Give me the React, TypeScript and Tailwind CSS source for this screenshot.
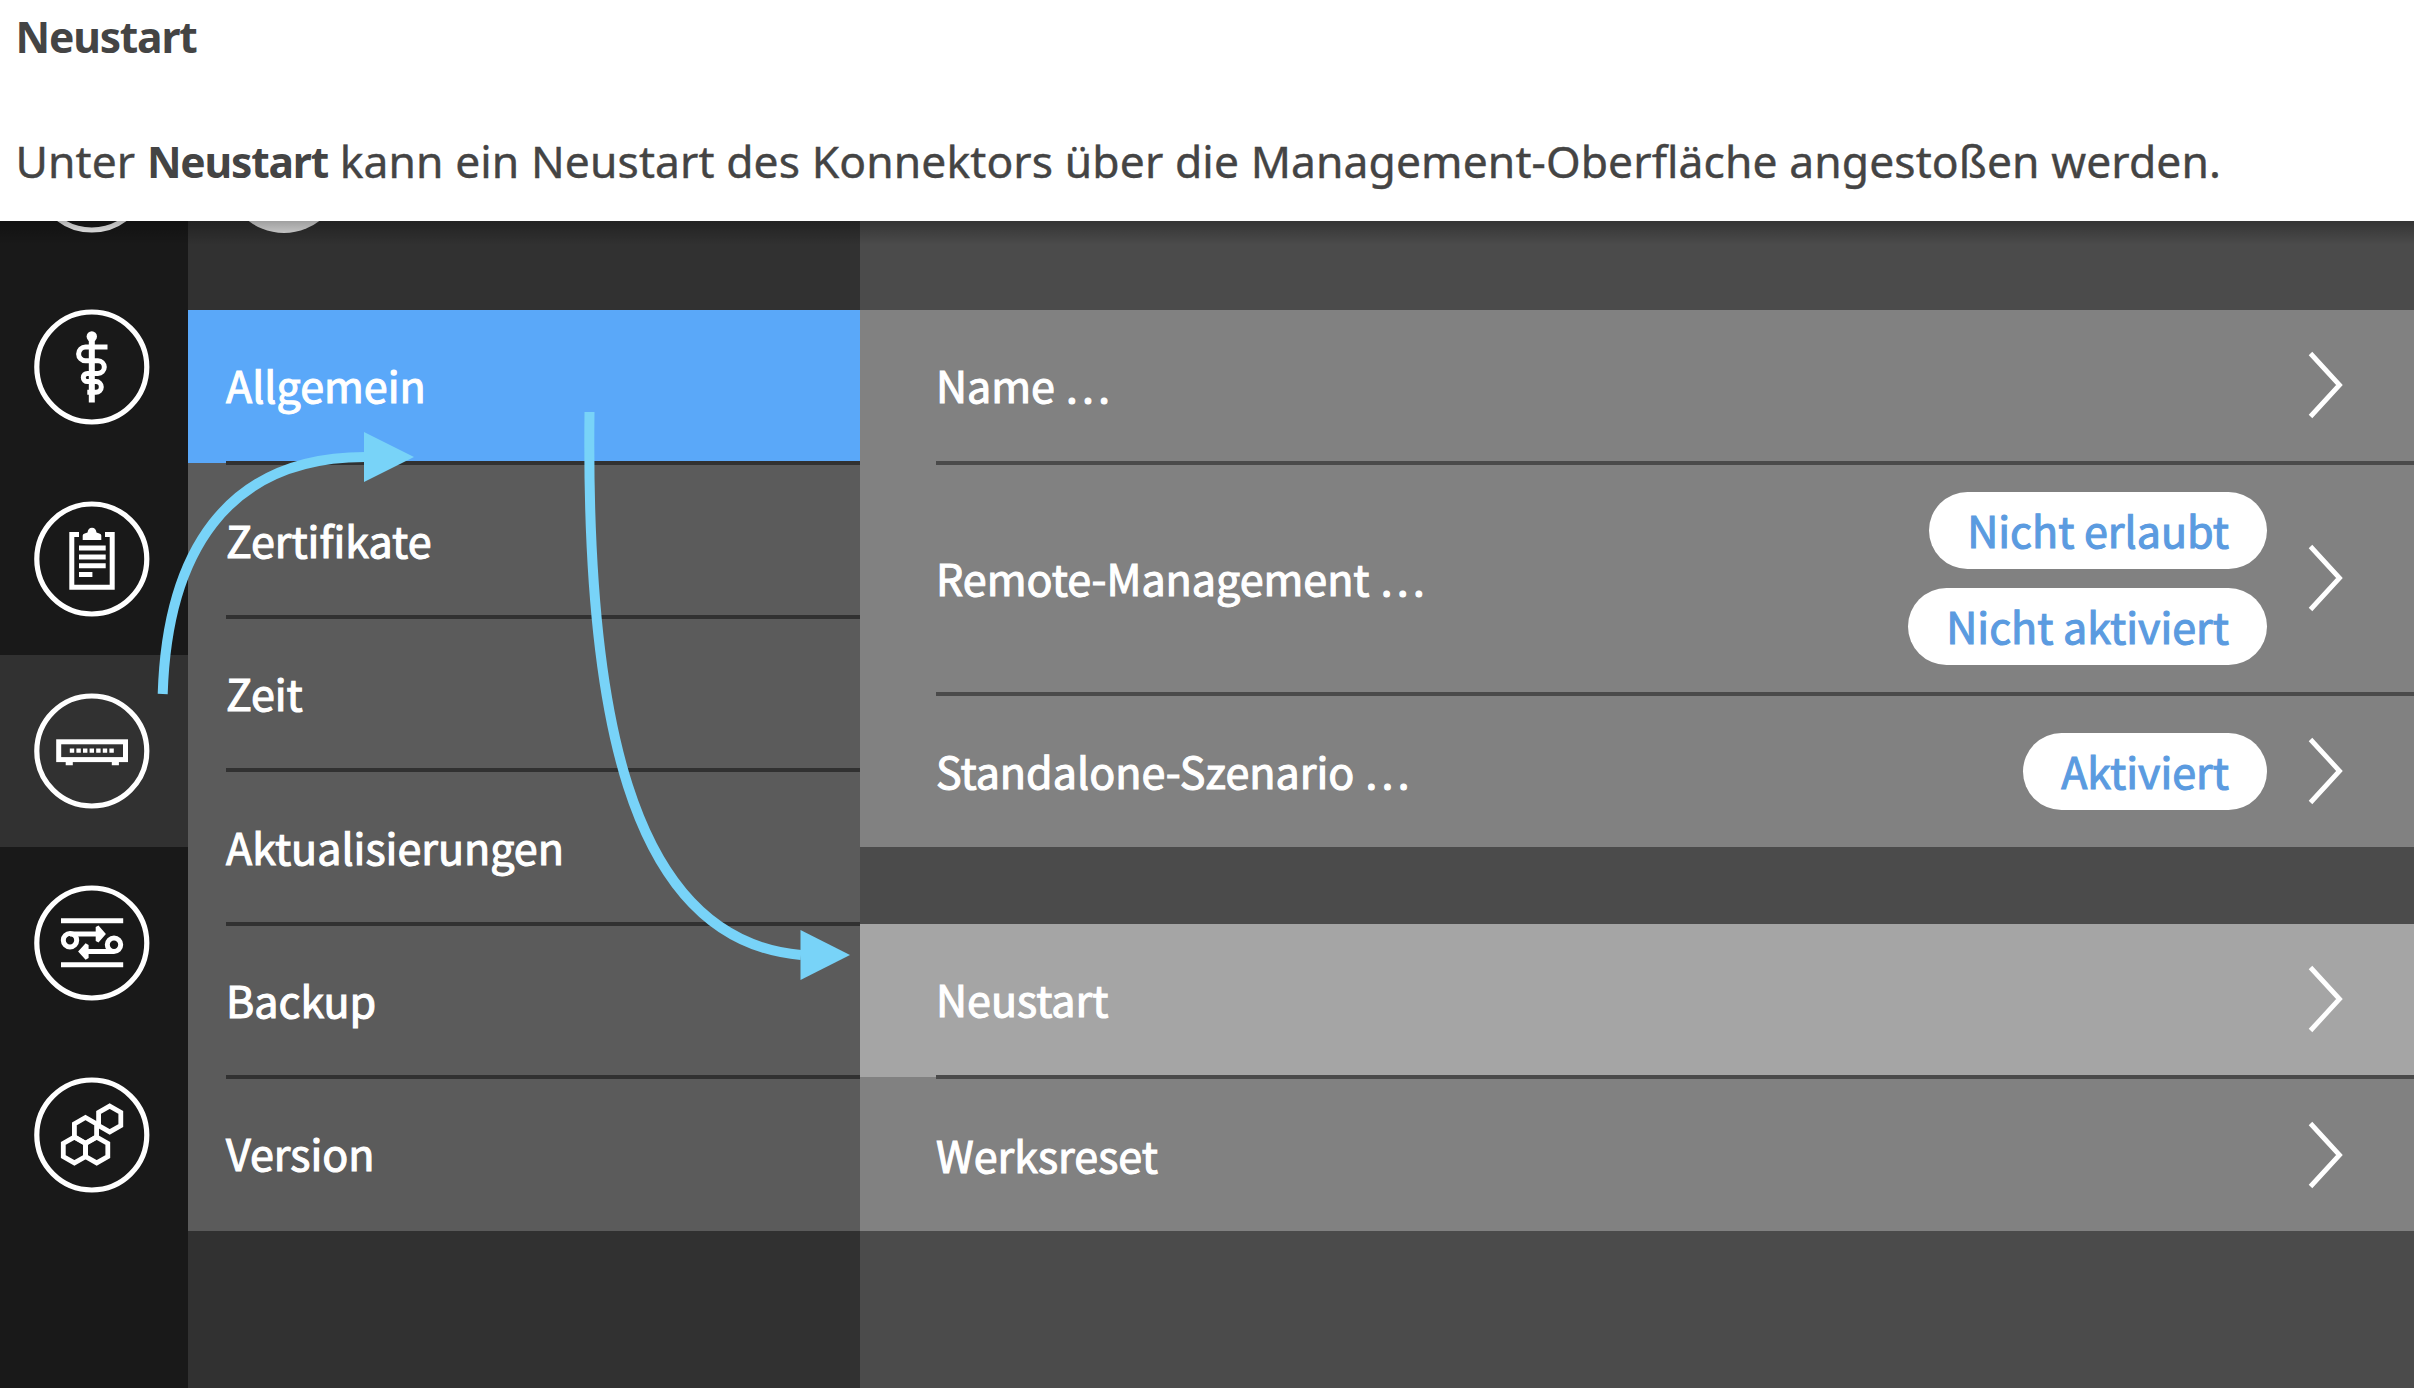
import type { ReactNode } from "react";

const uiFont =
  "font-['Noto_Sans_CJK_SC',sans-serif] text-[43px] leading-[64px] [-webkit-text-stroke:1.1px_currentColor]";

const strong = "font-bold text-[42.6px] tracking-[-1.2px] [-webkit-text-stroke:0px]";

const menu = [
  { label: "Allgemein", active: true, nudge: "-mt-[4px]" },
  { label: "Zertifikate", nudge: "-mt-[2px]" },
  { label: "Zeit", nudge: "-mt-[2px]" },
  { label: "Aktualisierungen", nudge: "-mt-[2px]" },
  { label: "Backup", nudge: "-mt-[2px]" },
  { label: "Version", nudge: "-mt-[4px]" },
];

function Icon({ children }: { children?: ReactNode }) {
  return (
    <svg viewBox="0 0 116 116" className="h-[116px] w-[116px]" fill="none" stroke="#fff" strokeWidth="5">
      <circle cx="57.8" cy="58" r="55" strokeWidth="5.2" />
      {children}
    </svg>
  );
}

function Asclepius() {
  return (
    <Icon>
      <circle cx="57.8" cy="27.5" r="5.2" fill="#fff" stroke="none" />
      <path d="M57.8 28V93.5" strokeWidth="6" />
      <path
        strokeWidth="5"
        d="M73.5 38H51.5a6.9 6.9 0 0 0 0 13.8H64a6.3 6.3 0 0 1 0 12.6H53.4a4.1 4.1 0 0 0 0 8.2H62a5.2 5.2 0 0 1 0 10.6H53.3"
      />
    </Icon>
  );
}

function Clipboard() {
  return (
    <Icon>
      <path d="M45 33.5H37.8V86.3H78.2V33.5H71" />
      <path
        d="M48.7 39V34.5q0-1.5 2-2l2.8-1q.6-4.8 4.5-4.8t4.5 4.8l2.8 1q2 .5 2 2V39z"
        fill="#fff"
        stroke="none"
      />
      <path d="M45 47H71.7M45 56H71.7M45 64.7H71.7M45 73.5H58.4" />
    </Icon>
  );
}

function Router() {
  return (
    <Icon>
      <rect x="24.7" y="48.8" width="66.8" height="17.8" />
      <path d="M31.7 70.2H38.8M77.8 70.2H84.9" strokeWidth="4" />
      <path d="M35.8 57.6H82" strokeWidth="4.4" strokeDasharray="4.4 2.2" />
    </Icon>
  );
}

function Exchange() {
  return (
    <Icon>
      <path d="M27 35.8H89.2M27 79.7H89.2" />
      <circle cx="36" cy="55.2" r="6.7" />
      <circle cx="80" cy="59.8" r="6.7" />
      <path d="M36 49H65M80 66.5H51" />
      <path
        d="M61.7 44.5L61.7 42L64.5 40.6L71.9 49L64.5 57.4L61.7 56zM54.6 60L51.6 58.2L44.1 66.5L51.6 74.8L54.6 73z"
        fill="#fff"
        stroke="none"
      />
    </Icon>
  );
}

function Hexagons() {
  const cells = [
    [75.7, 42],
    [51.5, 53.4],
    [40.4, 73],
    [62.7, 73],
  ];
  return (
    <Icon>
      {cells.map(([x, y]) => (
        <path key={x} strokeWidth="4.8" d={`M${x} ${y - 12.9}l11.1 6.4v13l-11.1 6.4l-11.1-6.4v-13z`} />
      ))}
    </Icon>
  );
}

function Chevron() {
  return (
    <svg viewBox="0 0 36 68" className="h-[68px] w-[36px]" fill="none" stroke="#fff" strokeWidth="4.8">
      <path d="M2.5 2.5L31.5 34L2.5 65.5" />
    </svg>
  );
}

function Pill({ children }: { children: ReactNode }) {
  return (
    <span className="flex h-[77px] items-center rounded-full bg-white px-[38px] text-[#5b9be0]">
      <span className="-mt-[2px]">{children}</span>
    </span>
  );
}

type RowProps = {
  label: string;
  pills?: string[];
  height: string;
  active?: boolean;
  line?: boolean;
  nudge?: string;
  sideNudge?: string;
};

function Row({ label, pills = [], height, active, line, nudge = "", sideNudge = "" }: RowProps) {
  return (
    <div
      className={`relative flex items-center pl-[76.5px] pr-[70px] ${height} ${active ? "bg-[#a5a5a5]" : "bg-[#818181]"}`}
    >
      <span className={`grow ${nudge}`}>{label}</span>
      <div className={`flex items-center gap-[41px] ${sideNudge}`}>
        <div className="flex flex-col items-end gap-[19px]">
          {pills.map((p) => (
            <Pill key={p}>{p}</Pill>
          ))}
        </div>
        <Chevron />
      </div>
      {line && <span className="absolute -bottom-[2px] left-[76px] right-0 z-10 h-[4px] bg-[#4a4a4a]" />}
    </div>
  );
}

export default function App() {
  return (
    <main className="flex h-[1388px] w-[2414px] flex-col overflow-hidden bg-white">
      <header className="h-[221px] pl-[15.5px] font-['Noto_Sans',sans-serif] text-[44.4px] leading-[60px] text-[#444] [-webkit-text-stroke:0.4px_currentColor]">
        <h1 className={`mt-[6px] ${strong}`}>Neustart</h1>
        <p className="mt-[65px] whitespace-nowrap tracking-[0.1px]">
          Unter <b className={strong}>Neustart</b> kann ein Neustart des Konnektors über die
          Management-Oberfläche angestoßen werden.
        </p>
      </header>
      <section className={`relative flex h-[1167px] text-white ${uiFont}`}>
        <nav className="flex w-[188px] flex-col bg-[#191919]">
          <div className="flex h-[50px] items-start overflow-hidden pl-[34px]">
            <div className="-mt-[104px]">
              <Icon />
            </div>
          </div>
          {[Asclepius, Clipboard, Router, Exchange, Hexagons].map((Glyph, i) => (
            <div key={i} className={`flex h-[192px] items-center pl-[34px] ${i === 2 ? "bg-[#313131]" : ""}`}>
              <Glyph />
            </div>
          ))}
        </nav>
        <aside className="flex w-[671.5px] flex-col bg-[#313131]">
          <div className="h-[88.5px] overflow-hidden pl-[38px]">
            <div className="-mt-[104px] h-[116px] w-[116px] rounded-full bg-[#e4e4e4]" />
          </div>
          {menu.map((m, i) => (
            <div
              key={m.label}
              className={`relative flex h-[153.5px] items-center pl-[38px] ${m.active ? "bg-[#5aa8f9]" : "bg-[#5b5b5b]"}`}
            >
              <span className={m.nudge}>{m.label}</span>
              {i < menu.length - 1 && (
                <span className="absolute -bottom-[2px] left-[38px] right-0 z-10 h-[4px] bg-[#313131]" />
              )}
            </div>
          ))}
        </aside>
        <div className="flex grow flex-col bg-[#4b4b4b] pt-[88.5px]">
          <Row label="Name …" height="h-[153.5px]" line nudge="-mt-[4px]" sideNudge="-mt-[2px]" />
          <Row
            label="Remote-Management …"
            pills={["Nicht erlaubt", "Nicht aktiviert"]}
            height="h-[230.5px]"
            line
            nudge="-mt-[2px]"
          />
          <Row label="Standalone-Szenario …" pills={["Aktiviert"]} height="h-[153.5px]" sideNudge="mt-[2px]" />
          <div className="h-[76.5px]" />
          <Row label="Neustart" height="h-[153.5px]" active line nudge="-mt-[4px]" sideNudge="-mt-[2px]" />
          <Row label="Werksreset" height="h-[153.5px]" sideNudge="mt-[2px]" />
        </div>
        <div className="absolute inset-x-0 top-0 z-10 h-[24px] bg-gradient-to-b from-black/30 to-transparent" />
        <svg
          viewBox="0 221 2414 1167"
          className="absolute inset-0 z-20 h-full w-full"
          fill="none"
          stroke="#78d3f8"
          strokeWidth="10"
        >
          <path d="M162.7 694C167 555 225 457 365 457" />
          <path d="M364 432L414 457L364 482Z" fill="#78d3f8" stroke="none" />
          <path d="M589.5 412C586 700 625 940 801 955" />
          <path d="M800.5 930L850 955L800.5 980Z" fill="#78d3f8" stroke="none" />
        </svg>
      </section>
    </main>
  );
}
